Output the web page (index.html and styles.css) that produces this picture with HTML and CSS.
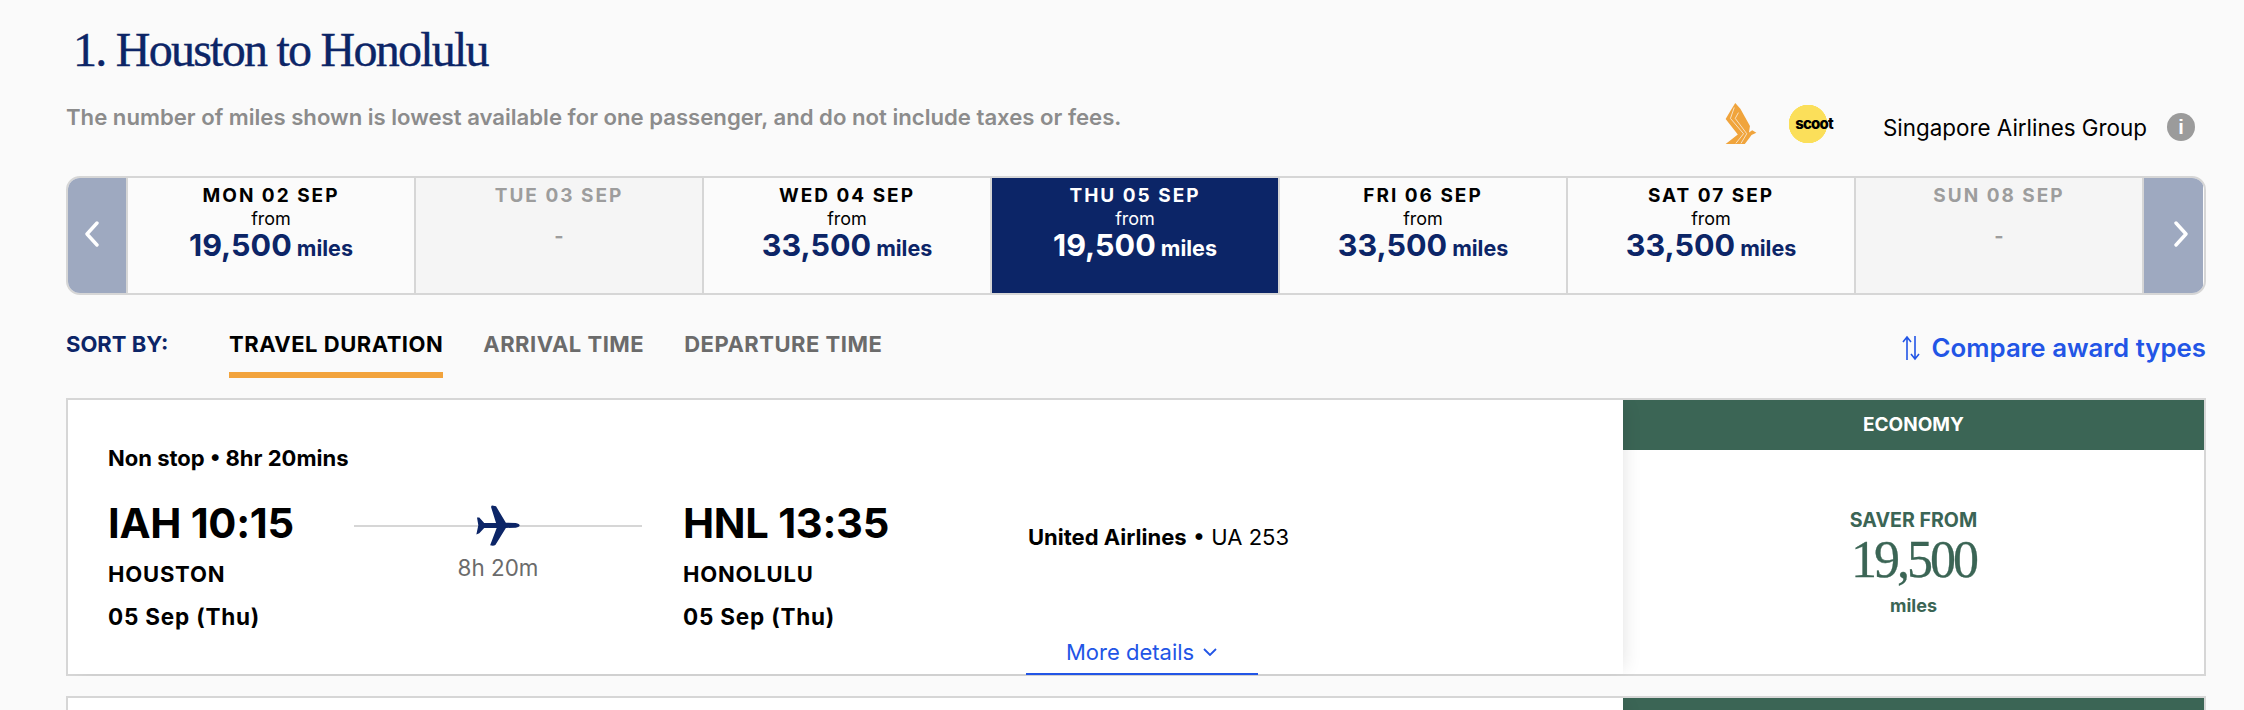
FILE: index.html
```html
<!DOCTYPE html>
<html lang="en">
<head>
<meta charset="utf-8">
<title>Houston to Honolulu</title>
<link rel="stylesheet" href="styles.css">
</head>
<body>
<main class="page">
  <header class="head">
    <div class="intro">
      <h1 class="title">1. Houston to Honolulu</h1>
      <p class="note">The number of miles shown is lowest available for one passenger, and do not include taxes or fees.</p>
    </div>
    <div class="brands">
      <svg class="bird" viewBox="28 18 100 132" aria-hidden="true">
        <path class="bird-body" d="M60 20 L76 38 L106 92 L103 112 L113 105 L126 113 L111 120 L90 148 L30 148 L68 118 L30 70 L42 50 Z"/>
        <path class="bird-line" d="M57 34 L45 68 L86 116 L62 146 M70 50 L60 68 L96 116 L78 146"/>
      </svg>
      <div class="scoot">scoot</div>
      <span class="group">Singapore Airlines Group</span>
      <span class="info">i</span>
    </div>
  </header>

  <section class="dates">
    <div class="nav nav-prev"><svg class="chev" viewBox="0 0 16 26"><path d="M13 2 L3 13 L13 24"/></svg></div>
    <div class="day"><b class="day-label">MON 02 SEP</b><span class="from">from</span><span class="price"><strong>19,500</strong> miles</span></div>
    <div class="day day-off"><b class="day-label">TUE 03 SEP</b><span class="dash">-</span></div>
    <div class="day"><b class="day-label">WED 04 SEP</b><span class="from">from</span><span class="price"><strong>33,500</strong> miles</span></div>
    <div class="day day-on"><b class="day-label">THU 05 SEP</b><span class="from">from</span><span class="price"><strong>19,500</strong> miles</span></div>
    <div class="day"><b class="day-label">FRI 06 SEP</b><span class="from">from</span><span class="price"><strong>33,500</strong> miles</span></div>
    <div class="day"><b class="day-label">SAT 07 SEP</b><span class="from">from</span><span class="price"><strong>33,500</strong> miles</span></div>
    <div class="day day-off"><b class="day-label">SUN 08 SEP</b><span class="dash">-</span></div>
    <div class="nav nav-next"><svg class="chev" viewBox="0 0 16 26"><path d="M3 2 L13 13 L3 24"/></svg></div>
  </section>

  <nav class="sort">
    <span class="sort-label">SORT BY:</span>
    <a class="tab tab-on">TRAVEL DURATION</a>
    <a class="tab">ARRIVAL TIME</a>
    <a class="tab">DEPARTURE TIME</a>
    <a class="compare">
      <svg class="compare-icon" viewBox="0 0 18 26"><path d="M5 25 V2 M1 7 L5 2 L9 7 M13 1 V24 M9 19 L13 24 L17 19"/></svg>
      Compare award types
    </a>
  </nav>

  <article class="card">
    <div class="flight">
      <div class="stops">Non stop • 8hr 20mins</div>
      <div class="legs">
        <div class="leg">
          <div class="time">IAH 10:15</div>
          <div class="city">HOUSTON</div>
          <div class="date">05 Sep (Thu)</div>
        </div>
        <div class="route">
          <div class="route-line">
            <svg class="plane" viewBox="405 42 138 128"><path d="M410 80 L417 80 L432 97 L468 97 L453 49 Q452 43 460 44 L468 46 L498 96 L528 97 Q540 100 540 104 Q540 109 528 111 L498 112 L466 164 Q460 168 450 165 L470 112 L432 112 L417 128 L408 132 L414 104 Z"/></svg>
          </div>
          <div class="duration">8h 20m</div>
        </div>
        <div class="leg leg-arrive">
          <div class="time">HNL 13:35</div>
          <div class="city">HONOLULU</div>
          <div class="date">05 Sep (Thu)</div>
        </div>
        <div class="carrier"><b>United Airlines</b> • UA 253</div>
      </div>
      <a class="more">More details <svg class="more-chev" viewBox="0 0 14 8"><path d="M1 1 L7 7 L13 1"/></svg></a>
    </div>
    <aside class="fare">
      <div class="fare-head">ECONOMY</div>
      <div class="fare-body">
        <div class="fare-kind">SAVER FROM</div>
        <div class="fare-miles">19,500</div>
        <div class="fare-unit">miles</div>
      </div>
    </aside>
  </article>

  <article class="card card-next">
    <div class="flight"></div>
    <aside class="fare"><div class="fare-head"></div></aside>
  </article>
</main>
</body>
</html>
```
FILE: styles.css
```css
* { box-sizing: border-box; }
html, body { margin: 0; height: 710px; overflow: hidden; background: #fafafa; }
body { font-family: Inter, "Liberation Sans", sans-serif; color: #000; }
.page { width: 2244px; padding: 0 38px 0 66px; }

.head { display: flex; justify-content: space-between; height: 176px; }
.intro { padding-top: 25px; }
.title { margin: 0; padding-left: 7px; font: 400 48px/50px "Liberation Serif", serif; letter-spacing: -1.75px; -webkit-text-stroke: 0.4px #0c2567; color: #0c2567; }
.note { margin: 30px 0 0; font-size: 22.15px; line-height: 24px; font-weight: 600; color: #8c8c8c; }

.brands { display: flex; align-items: center; align-self: flex-start; margin-top: 102px; padding-right: 11px; }
.bird { width: 32px; height: 43px; margin-right: 32px; }
.bird-body { fill: #f0a43c; }
.bird-line { fill: none; stroke: #fafafa; stroke-width: 2.2; }
.scoot { width: 44px; height: 38px; margin-right: 50px; display: flex; align-items: center; justify-content: flex-end; font-size: 15px; font-weight: 800; letter-spacing: -0.8px; background: radial-gradient(circle at 19px 19px, #fbdf5a 19px, transparent 19.6px); }
.group { margin: 9px 20px 0 0; font-size: 22.4px; line-height: 26px; }
.info { width: 28px; height: 28px; margin-top: 7px; border-radius: 50%; background: #9b9b9b; color: #fff; font: 700 20px/28px "Liberation Sans", sans-serif; text-align: center; }

.dates { display: flex; height: 119px; border: 2px solid #d6d6d6; border-radius: 14px; overflow: hidden; background: #fbfbfb; }
.nav { display: flex; align-items: center; justify-content: center; background: #9ea9c0; }
.nav-prev { width: 58px; padding: 0 10px 3px 0; }
.nav-next { width: 61px; border-left: 2px solid #d6d6d6; padding: 0 0 3px 14px; }
.chev { width: 16px; height: 26px; }
.chev path { fill: none; stroke: #fff; stroke-width: 3.4; stroke-linecap: round; stroke-linejoin: round; }
.day { width: 288px; display: flex; flex-direction: column; align-items: center; padding-top: 7px; border-left: 2px solid #d6d6d6; }
.day-label { font-size: 19px; line-height: 22px; font-weight: 700; letter-spacing: 2px; }
.from { font-size: 18px; line-height: 23px; }
.price { font-size: 21.5px; line-height: 30px; font-weight: 700; color: #0c2567; }
.price strong { font-size: 30.5px; font-weight: 700; }
.day-off { background: #f5f5f5; }
.day-off .day-label { color: #9d9d9d; }
.dash { margin-top: 17px; font-size: 20px; line-height: 24px; font-weight: 700; color: #9d9d9d; }
.day-on { background: #0c2567; color: #fff; }
.day-on .price { color: #fff; }

.sort { display: flex; align-items: flex-start; gap: 40px; margin-top: 33px; height: 50px; }
.sort-label { width: 163px; margin-right: -40px; font-size: 22px; line-height: 32px; font-weight: 700; color: #0c2567; }
.tab { font-size: 22px; line-height: 32px; letter-spacing: 0.5px; padding-bottom: 12px; font-weight: 700; color: #6b6b6b; }
.tab-on { color: #000; border-bottom: 6px solid #f2a33c; }
.compare { margin-left: auto; display: flex; align-items: center; gap: 12px; margin-top: 4px; font-size: 25.8px; line-height: 32px; font-weight: 600; color: #2255e6; white-space: nowrap; }
.compare-icon { width: 18px; height: 26px; }
.compare-icon path { fill: none; stroke: #2255e6; stroke-width: 1.6; }

.card { display: flex; height: 278px; margin-top: 20px; border: 2px solid #d6d6d6; background: #fff; }
.flight { width: 1555px; padding: 46px 0 0 40px; box-shadow: 6px 0 18px -6px rgba(0, 0, 0, .12); clip-path: inset(0 -30px -2px 0); }
.stops { font-size: 22px; line-height: 24px; font-weight: 700; }
.legs { display: flex; margin-top: 28px; }
.leg { width: 246px; }
.leg-arrive { width: 345px; margin-left: 41px; }
.time { font-size: 41.7px; line-height: 50px; font-weight: 700; letter-spacing: -0.3px; }
.city { margin-top: 14px; font-size: 22px; line-height: 24px; font-weight: 700; letter-spacing: 0.8px; }
.date { margin-top: 19px; font-size: 22.5px; line-height: 24px; font-weight: 700; letter-spacing: 0.8px; }
.route { width: 288px; padding-top: 7px; }
.route-line { display: flex; justify-content: center; background: linear-gradient(#d6d6d6, #d6d6d6) center / 100% 2px no-repeat; }
.plane { width: 46px; height: 42px; }
.plane path { fill: #0c2567; }
.duration { margin-top: 9px; font-size: 22.4px; line-height: 24px; text-align: center; color: #6b6b6b; }
.carrier { padding-top: 27px; font-size: 22px; line-height: 24px; }
.carrier b { font-weight: 700; }
.more { display: flex; align-items: center; gap: 9px; width: 232px; height: 35px; margin: 11px 0 -1px 918px; padding: 0 0 9px 40px; border-bottom: 2px solid #2255e6; font-size: 22px; line-height: 24px; color: #2255e6; }
.more-chev { width: 14px; height: 8px; }
.more-chev path { fill: none; stroke: #2255e6; stroke-width: 1.8; }

.fare { flex: 1; text-align: center; color: #3b6555; }
.fare-head { height: 50px; background: #3b6555; color: #fff; font-size: 19px; line-height: 50px; font-weight: 700; }
.fare-body { padding-top: 58px; }
.fare-kind { font-size: 19.6px; line-height: 24px; font-weight: 700; }
.fare-miles { margin-top: 3px; font: 400 52px/50px "Liberation Serif", serif; letter-spacing: -3px; -webkit-text-stroke: 0.3px #3b6555; }
.fare-unit { margin-top: 10px; font-size: 18px; line-height: 22px; font-weight: 700; }
```
